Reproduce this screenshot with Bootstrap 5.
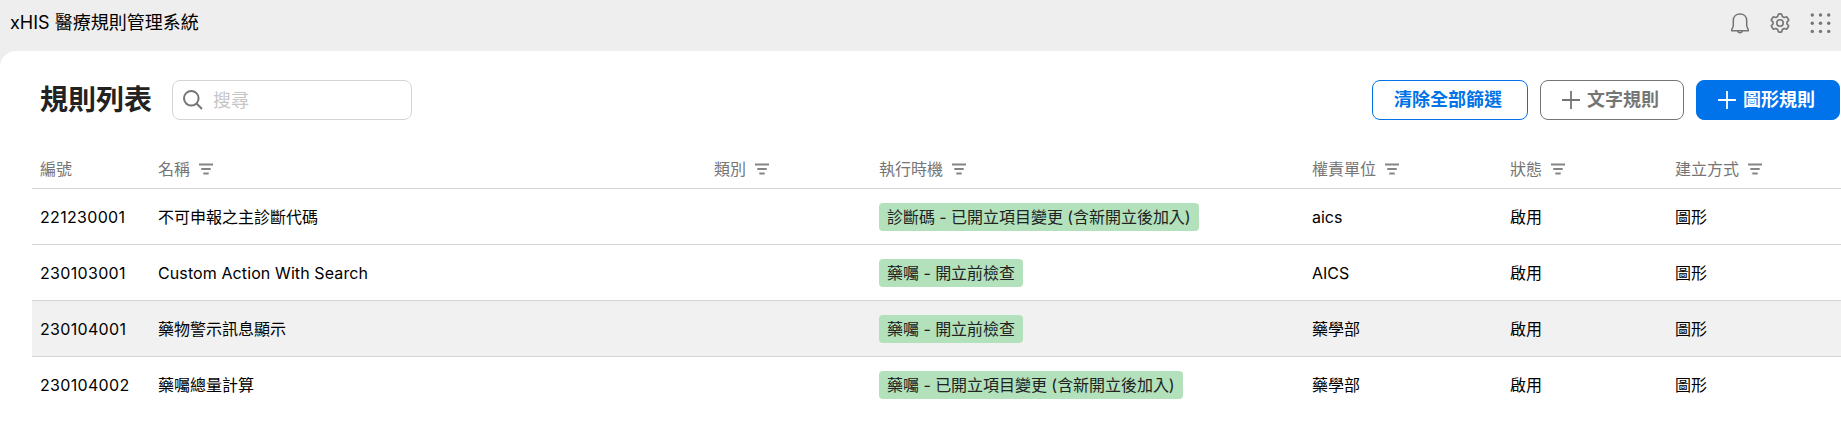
<!DOCTYPE html>
<html lang="zh-Hant">
<head>
<meta charset="utf-8">
<meta name="viewport" content="width=device-width, initial-scale=1">
<title>xHIS 醫療規則管理系統</title>
<link href="https://cdn.jsdelivr.net/npm/bootstrap@5.3.0/dist/css/bootstrap.min.css" rel="stylesheet">
<style>
  body { font-family: Inter, "Noto Sans CJK TC", sans-serif; font-size: 16px; color: #000; background: #eee; height: 100vh; overflow: hidden; }
  .topbar { flex: none; height: 51px; padding: 0 9px 5px 10px; color: #757575; }
  .app-name { font-size: 18px; line-height: 27px; color: #000; padding-bottom: 2px; }
  .top-icons { gap: 16px; }
  .panel { border-top-left-radius: 16px; padding: 29px 0 0 32px; min-height: 0; }
  .toolbar { height: 40px; padding: 0 1px 0 8px; margin-bottom: 28px; }
  .toolbar-actions { gap: 12px; }
  .page-title { font-size: 28px; line-height: 40px; font-weight: 700; color: #222; margin: 0 20px 0 0; }
  .search { width: 240px; height: 40px; border: 1px solid #d4d4d4; border-radius: 8px; padding: 0 7px; gap: 7px; color: #757575; }
  .search input { font-size: 18px; min-width: 0; line-height: 27px; }
  .search input::placeholder { color: #c6c6c6; opacity: 1; }
  .btn-rule { height: 40px; border-radius: 8px; font-size: 18px; font-weight: 700; line-height: 27px; width: 144px; padding: 0 6px 2px 0; gap: 4px; }
  .btn-rule svg { margin-top: 2px; }
  .btn-clear { width: 156px; color: #0073e6; border-color: #0073e6; padding-right: 4px; }
  .btn-text { color: #757575; border-color: #757575; }
  .btn-graph { color: #fff; background: #0073ea; border-color: #0073ea; }
  .rules { table-layout: fixed; width: 1825px; margin: 0; }
  .rules > :not(caption) > * > * { padding: 0 8px; vertical-align: middle; border-bottom: 1px solid #d4d4d4; color: #000; background: transparent; }
  .rules > thead > tr > th { height: 40px; font-weight: 400; color: #757575; padding-top: 3px; }
  .rules > thead svg { color: #858585; }
  .rules > tbody > tr > td { height: 56px; padding-top: 1px; }
  .rules > tbody > tr:last-child > td { border-bottom: 0; padding-top: 1px; }
  .rules > tbody > tr.active-row > td { background: #f1f1f1; }
  .rules > tbody > tr > td:nth-child(1) { letter-spacing: .32px; }
  .latin-name { letter-spacing: .1px; }
  .timing { display: inline-block; height: 28px; line-height: 28px; padding: 0 8px; border-radius: 4px; background: #b2e1bb; color: #222; vertical-align: middle; letter-spacing: -.04px; }
  svg { flex: none; display: block; }
</style>
</head>
<body class="d-flex flex-column">
<svg width="0" height="0" class="d-none">
  <symbol id="filter" viewBox="0 0 24 24"><path d="M5 7.500h14M7.300 12h9.400M9.300 16.500h5.400" fill="none" stroke="currentColor" stroke-width="2"/></symbol>
  <symbol id="plus" viewBox="0 0 24 24"><path d="M12 3v18M3 12h18" fill="none" stroke="currentColor" stroke-width="1.800"/></symbol>
</svg>
<header class="topbar d-flex align-items-center justify-content-between">
  <span class="app-name">xHIS 醫療規則管理系統</span>
  <div class="top-icons d-flex align-items-center">
    <svg width="24" height="24" viewBox="0 0 24 24" fill="none" stroke="currentColor" stroke-width="1.5" stroke-linejoin="round"><path d="M12 3C8 3 5.300 5.800 5.300 9.500V15L3.700 18.700V19.700H20.300V18.700L18.700 15V9.500C18.700 5.800 16 3 12 3Z"/><path d="M9.700 19.800C9.900 21 10.700 21.700 12 21.700S14.100 21 14.300 19.800"/></svg>
    <svg width="24" height="24" viewBox="0 0 24 24" fill="none" stroke="currentColor" stroke-width="1.6" stroke-linejoin="round"><circle cx="12" cy="12" r="3.200"/><path d="M10.100 3.800Q10.300 2.900 11.200 2.900H12.800Q13.700 2.900 13.900 3.800L14.300 5.500Q15.300 5.900 16.100 6.500L17.800 6Q18.700 5.700 19.200 6.500L20.400 8.500Q20.900 9.300 20.200 9.900L18.900 11.100Q19 12 18.900 12.900L20.200 14.100Q20.900 14.700 20.400 15.500L19.200 17.500Q18.700 18.300 17.800 18L16.100 17.500Q15.300 18.100 14.300 18.500L13.900 20.200Q13.700 21.100 12.800 21.100H11.200Q10.300 21.100 10.100 20.200L9.700 18.500Q8.700 18.100 7.900 17.500L6.200 18Q5.300 18.300 4.800 17.500L3.600 15.500Q3.100 14.700 3.800 14.100L5.100 12.900Q5 12 5.100 11.100L3.800 9.900Q3.100 9.300 3.600 8.500L4.800 6.500Q5.300 5.700 6.200 6L7.900 6.500Q8.700 5.900 9.700 5.500Z"/></svg>
    <svg width="24" height="24" viewBox="0 0 24 24" fill="currentColor"><circle cx="4.300" cy="4" r="1.700"/><circle cx="12.500" cy="4" r="1.700"/><circle cx="20.700" cy="4" r="1.700"/><circle cx="4.300" cy="12.200" r="1.700"/><circle cx="12.500" cy="12.200" r="1.700"/><circle cx="20.700" cy="12.200" r="1.700"/><circle cx="4.300" cy="20.400" r="1.700"/><circle cx="12.500" cy="20.400" r="1.700"/><circle cx="20.700" cy="20.400" r="1.700"/></svg>
  </div>
</header>
<main class="panel bg-white flex-grow-1 overflow-hidden">
  <div class="toolbar d-flex align-items-center">
    <h1 class="page-title">規則列表</h1>
    <label class="search d-flex align-items-center bg-white">
      <svg width="26" height="26" viewBox="0 0 26 26" fill="none" stroke="currentColor" stroke-width="2"><circle cx="11.300" cy="11.300" r="7.300"/><path d="M16.500 16.500L22 22"/></svg>
      <input class="border-0 bg-transparent p-0 flex-grow-1" type="text" placeholder="搜尋">
    </label>
    <div class="toolbar-actions d-flex ms-auto">
      <button class="btn btn-rule btn-clear">清除全部篩選</button>
      <button class="btn btn-rule btn-text d-flex align-items-center justify-content-center"><svg width="24" height="24"><use href="#plus"/></svg>文字規則</button>
      <button class="btn btn-rule btn-graph d-flex align-items-center justify-content-center"><svg width="24" height="24"><use href="#plus"/></svg>圖形規則</button>
    </div>
  </div>
  <table class="table rules">
    <colgroup><col style="width:118px"><col style="width:556px"><col style="width:165px"><col style="width:433px"><col style="width:198px"><col style="width:165px"><col></colgroup>
    <thead>
      <tr>
        <th>編號</th>
        <th><div class="d-flex align-items-center gap-1">名稱<svg width="24" height="24"><use href="#filter"/></svg></div></th>
        <th><div class="d-flex align-items-center gap-1">類別<svg width="24" height="24"><use href="#filter"/></svg></div></th>
        <th><div class="d-flex align-items-center gap-1">執行時機<svg width="24" height="24"><use href="#filter"/></svg></div></th>
        <th><div class="d-flex align-items-center gap-1">權責單位<svg width="24" height="24"><use href="#filter"/></svg></div></th>
        <th><div class="d-flex align-items-center gap-1">狀態<svg width="24" height="24"><use href="#filter"/></svg></div></th>
        <th><div class="d-flex align-items-center gap-1">建立方式<svg width="24" height="24"><use href="#filter"/></svg></div></th>
      </tr>
    </thead>
    <tbody>
      <tr><td>221230001</td><td>不可申報之主診斷代碼</td><td></td><td><span class="timing">診斷碼 - 已開立項目變更 (含新開立後加入)</span></td><td>aics</td><td>啟用</td><td>圖形</td></tr>
      <tr><td>230103001</td><td class="latin-name">Custom Action With Search</td><td></td><td><span class="timing">藥囑 - 開立前檢查</span></td><td>AICS</td><td>啟用</td><td>圖形</td></tr>
      <tr class="active-row"><td>230104001</td><td>藥物警示訊息顯示</td><td></td><td><span class="timing">藥囑 - 開立前檢查</span></td><td>藥學部</td><td>啟用</td><td>圖形</td></tr>
      <tr><td>230104002</td><td>藥囑總量計算</td><td></td><td><span class="timing">藥囑 - 已開立項目變更 (含新開立後加入)</span></td><td>藥學部</td><td>啟用</td><td>圖形</td></tr>
    </tbody>
  </table>
</main>
<script src="https://cdn.jsdelivr.net/npm/bootstrap@5.3.0/dist/js/bootstrap.bundle.min.js"></script>
</body>
</html>
